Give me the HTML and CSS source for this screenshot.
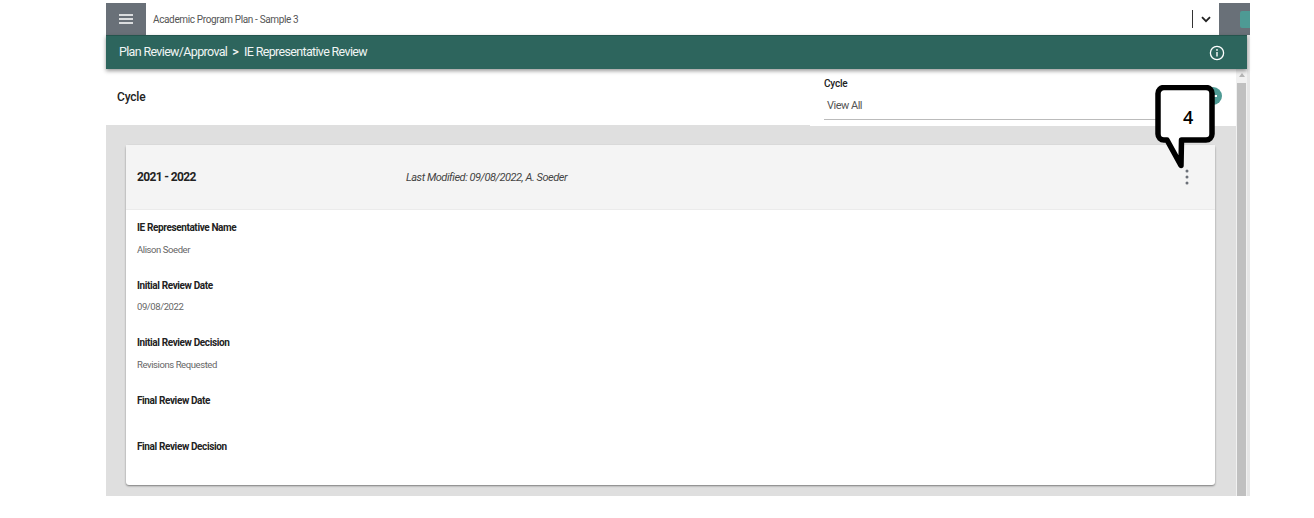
FILE: index.html
```html
<!DOCTYPE html>
<html lang="en">
<head>
<meta charset="utf-8">
<title>IE Representative Review</title>
<link rel="stylesheet" href="styles.css">
</head>
<body>
<div class="app">
  <header class="topbar">
    <div class="menu-btn">
      <svg width="14" height="10" viewBox="0 0 14 10"><path d="M0 1h14M0 5h14M0 9h14" stroke="#fff" stroke-width="1.6"/></svg>
    </div>
    <div class="plan-name">Academic Program Plan - Sample 3</div>
    <div class="sep"></div>
    <div class="chev">
      <svg width="10" height="7" viewBox="0 0 10 7"><path d="M1 1.2l4 4 4-4" fill="none" stroke="#222" stroke-width="1.8"/></svg>
    </div>
    <div class="side-block"><span class="side-chip"></span></div>
  </header>
  <div class="shell">
    <div class="crumbbar">
      <div class="crumbs"><span>Plan Review/Approval</span><span class="gt">&gt;</span><span>IE Representative Review</span></div>
      <svg class="info" width="16" height="16" viewBox="0 0 16 16"><circle cx="8" cy="8" r="6.6" fill="none" stroke="#fff" stroke-width="1.3"/><path d="M8 7v4.600" stroke="#fff" stroke-width="1.4"/><circle cx="8" cy="4.900" r=".9" fill="#fff"/></svg>
    </div>
    <div class="body-row">
      <main class="content">
        <div class="cycle-head">
          <div class="cycle-title">Cycle</div>
          <div class="cycle-filter">
            <div class="filter-label">Cycle</div>
            <div class="filter-value">View All</div>
          </div>
          <div class="add-btn"></div>
        </div>
        <div class="list">
          <section class="card">
            <div class="card-head">
              <div class="year">2021 - 2022</div>
              <div class="modified">Last Modified: 09/08/2022, A. Soeder</div>
              <svg class="kebab" width="4" height="16" viewBox="0 0 4 16"><circle cx="2" cy="2" r="1.5" fill="#6b7078"/><circle cx="2" cy="8" r="1.5" fill="#6b7078"/><circle cx="2" cy="14" r="1.5" fill="#6b7078"/></svg>
            </div>
            <div class="card-body">
              <div class="field"><div class="f-label">IE Representative Name</div><div class="f-value">Alison Soeder</div></div>
              <div class="field"><div class="f-label">Initial Review Date</div><div class="f-value">09/08/2022</div></div>
              <div class="field"><div class="f-label">Initial Review Decision</div><div class="f-value">Revisions Requested</div></div>
              <div class="field field-empty"><div class="f-label">Final Review Date</div></div>
              <div class="field field-empty"><div class="f-label">Final Review Decision</div></div>
            </div>
          </section>
        </div>
      </main>
      <div class="scrollbar">
        <div class="scroll-up"></div>
        <div class="scroll-thumb"></div>
      </div>
    </div>
  </div>
  <div class="callout">
    <svg width="64" height="86" viewBox="0 0 64 86"><path d="M9 2.500H51a6 6 0 0 1 6 6V49a6 6 0 0 1-6 6H26.500L26 80.500 12 55H9a6 6 0 0 1-6-6V8.500a6 6 0 0 1 6-6z" fill="#fff" stroke="#000" stroke-width="5.500" stroke-linejoin="round"/></svg>
    <span class="callout-num">4</span>
  </div>
</div>
</body>
</html>
```
FILE: styles.css
```css
* { box-sizing: border-box; }
html, body { margin: 0; padding: 0; background: #fff; }
body { padding: 3px 0 0 106px; font-family: Roboto, "Liberation Sans", sans-serif; overflow: hidden; }
.app { position: relative; width: 1144px; height: 493px; display: flex; flex-direction: column; background: #e6e6e6; }

.topbar { height: 32px; flex: none; display: flex; align-items: center; background: #fff; }
.menu-btn { width: 40px; height: 32px; background: #697078; display: flex; align-items: center; justify-content: center; }
.plan-name { flex: 1; padding-left: 7px; font-size: 10px; color: #555; letter-spacing: -.36px; }
.sep { width: 1px; height: 18px; background: #333; }
.chev { width: 26px; display: flex; justify-content: center; }
.side-block { width: 31px; height: 32px; background: #697078; display: flex; align-items: center; justify-content: flex-end; }
.side-chip { width: 10px; height: 17px; background: #4e9a94; border-radius: 2px 0 0 2px; }

.shell { flex: 1; width: 1141px; display: flex; flex-direction: column; min-height: 0; }
.crumbbar { height: 34px; flex: none; position: relative; z-index: 1; display: flex; align-items: center; justify-content: space-between; padding: 0 22px 0 13px; background: #2d655d; border-top: 1px solid #24544d; box-shadow: 0 2px 4px rgba(0,0,0,.4); color: #fff; }
.crumbs { display: flex; gap: 5px; margin-top: -2px; font-size: 12.500px; letter-spacing: -.66px; color: #f0f5f4; }
.gt { font-weight: 500; margin-right: 1px; }

.body-row { flex: 1; display: flex; min-height: 0; }
.content { flex: 1; min-width: 0; display: flex; flex-direction: column; background: #dfdfdf; }
.cycle-head { height: 56px; flex: none; position: relative; display: flex; background: #fff; padding-left: 11px; }
.cycle-title { margin-top: 21px; font-size: 12px; font-weight: 500; color: #222; letter-spacing: -.2px; }
.cycle-filter { position: absolute; left: 704px; top: 0; width: 426px; height: 57px; background: #fff; padding: 9px 0 0 14px; }
.filter-label { font-size: 10px; font-weight: 500; color: #222; letter-spacing: -.2px; line-height: 12px; }
.filter-value { width: 370px; margin-top: 4px; height: 26px; padding: 4px 0 0 3px; border-bottom: 1px solid #bbb; font-size: 11px; line-height: 16px; color: #555; letter-spacing: -.5px; }
.add-btn { position: absolute; left: 1098px; top: 18px; width: 18px; height: 18px; border-radius: 50%; background: #4e9a94; }
.add-btn::after { content: ""; position: absolute; left: 5px; top: 8px; width: 8px; height: 2px; background: #fff; }

.list { flex: 1; padding: 20px 21px 11px 20px; }
.card { height: 340px; background: #fff; border-radius: 3px; box-shadow: 0 1px 2px rgba(0,0,0,.45); }
.card-head { height: 65px; position: relative; display: flex; align-items: center; padding: 0 11px; background: #f4f4f4; border-bottom: 1px solid #ebebeb; }
.year { width: 269px; font-size: 12px; font-weight: 700; color: #222; letter-spacing: -.65px; }
.modified { font-size: 11px; font-style: italic; color: #444; letter-spacing: -.47px; }
.kebab { position: absolute; left: 1058.500px; top: 24px; }
.card-body { padding: 11px 11px; }
.field { height: 57.500px; }
.field-empty { height: 46px; }
.f-label { font-size: 10px; line-height: 13px; font-weight: 700; color: #222; letter-spacing: -.38px; }
.f-value { margin-top: 8.500px; font-size: 9.500px; line-height: 13px; color: #666; letter-spacing: -.42px; }

.scrollbar { width: 11px; flex: none; display: flex; flex-direction: column; align-items: center; background: #f1f1f1; padding-top: 4px; }
.scroll-up { width: 0; height: 0; border-left: 3.500px solid transparent; border-right: 3.500px solid transparent; border-bottom: 4px solid #b5b5b5; }
.scroll-thumb { flex: 1; width: 9px; margin-top: 6px; background: #c0c0c0; }

.callout { position: absolute; left: 1049px; top: 82px; width: 64px; height: 86px; }
.callout svg { display: block; }
.callout-num { position: absolute; left: 28px; top: 21px; font-family: "Open Sans", "Liberation Sans", sans-serif; font-size: 18px; line-height: 22px; font-weight: 600; color: #000; }
```
